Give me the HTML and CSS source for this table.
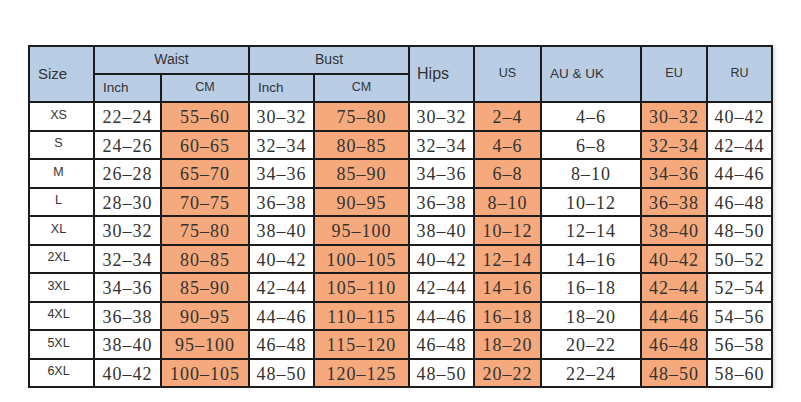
FILE: index.html
```html
<!DOCTYPE html>
<html>
<head>
<meta charset="utf-8">
<link rel="stylesheet" href="styles.css">
</head>
<body>
<table class="chart">
  <colgroup>
    <col class="c-size"><col class="c-wi"><col class="c-wc"><col class="c-bi"><col class="c-bc"><col class="c-hips"><col class="c-us"><col class="c-au"><col class="c-eu"><col class="c-ru">
  </colgroup>
  <thead>
    <tr class="h1">
      <th rowspan="2" class="left size-h">Size</th>
      <th colspan="2" class="grp">Waist</th>
      <th colspan="2" class="grp">Bust</th>
      <th rowspan="2" class="left hips">Hips</th>
      <th rowspan="2" class="sm">US</th>
      <th rowspan="2" class="left">AU &amp; UK</th>
      <th rowspan="2" class="sm">EU</th>
      <th rowspan="2" class="sm">RU</th>
    </tr>
    <tr class="h2">
      <th class="left">Inch</th>
      <th class="sm">CM</th>
      <th class="left">Inch</th>
      <th class="sm">CM</th>
    </tr>
  </thead>
  <tbody>
    <tr><td class="sz">XS</td><td>22–24</td><td class="o">55–60</td><td>30–32</td><td class="o">75–80</td><td>30–32</td><td class="o">2–4</td><td>4–6</td><td class="o">30–32</td><td>40–42</td></tr>
    <tr><td class="sz">S</td><td>24–26</td><td class="o">60–65</td><td>32–34</td><td class="o">80–85</td><td>32–34</td><td class="o">4–6</td><td>6–8</td><td class="o">32–34</td><td>42–44</td></tr>
    <tr><td class="sz">M</td><td>26–28</td><td class="o">65–70</td><td>34–36</td><td class="o">85–90</td><td>34–36</td><td class="o">6–8</td><td>8–10</td><td class="o">34–36</td><td>44–46</td></tr>
    <tr><td class="sz">L</td><td>28–30</td><td class="o">70–75</td><td>36–38</td><td class="o">90–95</td><td>36–38</td><td class="o">8–10</td><td>10–12</td><td class="o">36–38</td><td>46–48</td></tr>
    <tr><td class="sz">XL</td><td>30–32</td><td class="o">75–80</td><td>38–40</td><td class="o">95–100</td><td>38–40</td><td class="o">10–12</td><td>12–14</td><td class="o">38–40</td><td>48–50</td></tr>
    <tr><td class="sz">2XL</td><td>32–34</td><td class="o">80–85</td><td>40–42</td><td class="o">100–105</td><td>40–42</td><td class="o">12–14</td><td>14–16</td><td class="o">40–42</td><td>50–52</td></tr>
    <tr><td class="sz">3XL</td><td>34–36</td><td class="o">85–90</td><td>42–44</td><td class="o">105–110</td><td>42–44</td><td class="o">14–16</td><td>16–18</td><td class="o">42–44</td><td>52–54</td></tr>
    <tr><td class="sz">4XL</td><td>36–38</td><td class="o">90–95</td><td>44–46</td><td class="o">110–115</td><td>44–46</td><td class="o">16–18</td><td>18–20</td><td class="o">44–46</td><td>54–56</td></tr>
    <tr><td class="sz">5XL</td><td>38–40</td><td class="o">95–100</td><td>46–48</td><td class="o">115–120</td><td>46–48</td><td class="o">18–20</td><td>20–22</td><td class="o">46–48</td><td>56–58</td></tr>
    <tr><td class="sz">6XL</td><td>40–42</td><td class="o">100–105</td><td>48–50</td><td class="o">120–125</td><td>48–50</td><td class="o">20–22</td><td>22–24</td><td class="o">48–50</td><td>58–60</td></tr>
  </tbody>
</table>
</body>
</html>
```

FILE: styles.css
```css
html, body {
  margin: 0;
  padding: 0;
  background: #ffffff;
}
body {
  padding: 45px 0 0 28px;
}
.chart {
  border-collapse: collapse;
  table-layout: fixed;
  width: 743px;
  box-shadow: 2px 2px 3px rgba(0,0,0,0.15);
}
.c-size { width: 65px; }
.c-wi { width: 67px; }
.c-wc { width: 88px; }
.c-bi { width: 65px; }
.c-bc { width: 95px; }
.c-hips { width: 65px; }
.c-us { width: 67px; }
.c-au { width: 100px; }
.c-eu { width: 66px; }
.c-ru { width: 65px; }

.chart th, .chart td {
  border: 2px solid #1c1c1c;
  padding: 0;
  overflow: hidden;
  white-space: nowrap;
}
.chart th {
  background: #b9cde5;
  font-family: "Liberation Sans", Arial, sans-serif;
  font-weight: normal;
  font-size: 13.5px;
  line-height: 16px;
  color: #333333;
  text-align: center;
}
.chart th.left {
  text-align: left;
  padding-left: 8px;
}
.chart th.grp {
  font-size: 14px;
  padding-bottom: 2px;
}
.chart th.sm {
  font-size: 12.5px;
  padding-bottom: 2px;
}
.chart th.size-h {
  font-size: 15px;
}
.chart th.hips {
  font-size: 16px;
  padding-left: 7px;
}
.h1 { height: 28px; }
.h2 { height: 28px; }

tbody tr { height: 28.5px; }
.chart td {
  background: #ffffff;
  font-family: "Liberation Serif", "Times New Roman", serif;
  font-size: 18px;
  letter-spacing: 1px;
  color: #333333;
  text-align: center;
  padding-top: 2px;
  line-height: 20px;
}
.chart td.o {
  background: #f5a97c;
}
.chart td.sz {
  font-family: "Liberation Sans", Arial, sans-serif;
  font-size: 12.5px;
  letter-spacing: 0;
  padding: 0 6px 3px 0;
  line-height: 16px;
}
```
